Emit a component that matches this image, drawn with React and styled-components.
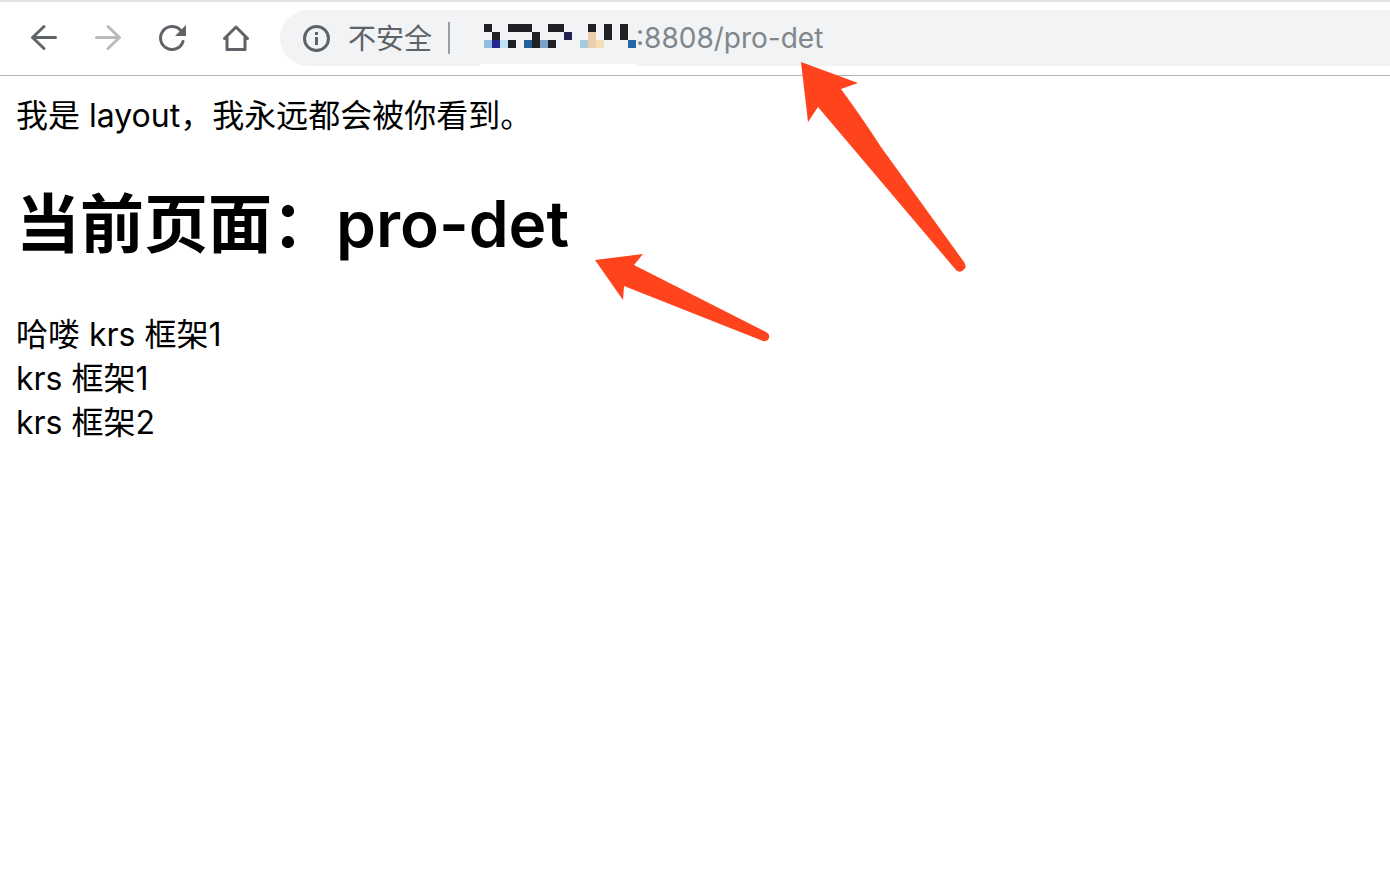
import React from "react";
import styled, { createGlobalStyle } from "styled-components";

const GlobalStyle = createGlobalStyle`
  * { box-sizing: border-box; }
  body {
    margin: 0;
    background: #fff;
    color: #000;
    font-family: Inter, "Noto Sans CJK SC", sans-serif;
  }
`;

const Window = styled.div`
  position: relative;
  min-height: 100vh;
  overflow: hidden;
`;

const Toolbar = styled.header`
  display: flex;
  align-items: center;
  height: 76px;
  padding: 0 0 1px 12px;
  border-top: 2px solid #dee1e6;
  border-bottom: 1px solid #b4b4b6;
`;

const NavButton = styled.button`
  display: flex;
  align-items: center;
  justify-content: center;
  width: 64px;
  height: 64px;
  padding: 0;
  border: 0;
  background: none;
  color: ${(p) => (p.disabled ? "#bababc" : "#5f6368")};
`;

const AddressBar = styled.div`
  display: flex;
  align-items: center;
  flex: 1;
  min-width: 0;
  height: 56px;
  margin-left: 12px;
  padding-left: 22px;
  border-radius: 28px 0 0 28px;
  background: #f1f3f4;
`;

const SiteInfo = styled.button`
  display: flex;
  align-items: center;
  gap: 18px;
  padding: 0;
  border: 0;
  background: none;
  color: #5f6368;
  font: 28px/40px "Noto Sans CJK SC", sans-serif;
`;

const SiteInfoLabel = styled.span`
  padding-bottom: 2px;
`;

const Divider = styled.span`
  width: 2px;
  height: 32px;
  margin: 0 30px 0 16px;
  background: #9b9ea2;
`;

const HiddenHost = styled.span`
  display: flex;
  align-items: flex-start;
  align-self: stretch;
  padding: 14px 0 0 4px;
  border-bottom: 2px solid #fff;
`;

const UrlInput = styled.input`
  flex: 1;
  min-width: 0;
  padding: 0;
  border: 0;
  outline: 0;
  background: none;
  color: #80868b;
  font: 28px/40px Inter, sans-serif;
`;

const Page = styled.main`
  padding: 18px 16px;
  font-size: 32px;
  line-height: 44px;
`;

const Title = styled.h1`
  margin: 41px 0 44px;
  font-size: 64px;
  font-weight: 600;
  line-height: 90px;
`;

const Line = styled.div``;

const Annotations = styled.svg`
  position: absolute;
  top: 0;
  left: 0;
  pointer-events: none;
`;

const MOSAIC = [
  [0, 0, 1, "#202124"], [3, 0, 3, "#202124"], [8, 0, 2, "#202124"],
  [13, 0, 1, "#202124"], [15, 0, 1, "#202124"], [17, 0, 1, "#202124"],
  [1, 1, 1, "#202124"], [6, 1, 1, "#202124"], [10, 1, 1, "#231f4f"],
  [13, 1, 1, "#ebcfaa"], [15, 1, 1, "#202124"], [17, 1, 1, "#202124"],
  [0, 2, 1, "#93bbdf"], [1, 2, 1, "#232590"], [2, 2, 1, "#bfe1f1"],
  [3, 2, 1, "#202124"], [5, 2, 1, "#245f97"], [6, 2, 1, "#202124"],
  [7, 2, 1, "#7ea3c8"], [8, 2, 1, "#202124"], [12, 2, 1, "#a8cadf"],
  [13, 2, 1, "#ebcfaa"], [14, 2, 1, "#f2dfba"], [18, 2, 1, "#2566a9"],
];

const stroke = { fill: "none", stroke: "currentColor", strokeWidth: 3, strokeLinecap: "round", strokeLinejoin: "round" };

function BackIcon() {
  return (
    <svg width="28" height="28" viewBox="0 0 28 28" {...stroke}>
      <path d="M25.5 13.5H2.5M14 2.5L2.5 13.5L14 24.5" />
    </svg>
  );
}

function ForwardIcon() {
  return (
    <svg width="28" height="28" viewBox="0 0 28 28" {...stroke}>
      <path d="M2.5 13.5H25.5M14 2.5L25.5 13.5L14 24.5" />
    </svg>
  );
}

function ReloadIcon() {
  return (
    <svg width="28" height="28" viewBox="0 0 28 28">
      <path d="M25 17.5A11.5 11.5 0 1 1 22.5 6.2" {...stroke} />
      <path d="M28 1V12H17Z" fill="currentColor" />
    </svg>
  );
}

function HomeIcon() {
  return (
    <svg width="28" height="28" viewBox="0 0 28 28" {...stroke}>
      <path d="M2.5 14.5L14 3L25.5 14.5M5 13V25.5H23V13" />
    </svg>
  );
}

function InfoIcon() {
  return (
    <svg width="28" height="28" viewBox="0 0 28 28">
      <circle cx="14.5" cy="14.5" r="12" fill="none" stroke="currentColor" strokeWidth="3" />
      <path d="M13 8H16V11H13ZM13 13H16V21H13Z" fill="currentColor" />
    </svg>
  );
}

export default function App() {
  return (
    <Window>
      <GlobalStyle />
      <Toolbar>
        <NavButton aria-label="后退"><BackIcon /></NavButton>
        <NavButton aria-label="前进" disabled><ForwardIcon /></NavButton>
        <NavButton aria-label="重新加载"><ReloadIcon /></NavButton>
        <NavButton aria-label="主页"><HomeIcon /></NavButton>
        <AddressBar>
          <SiteInfo>
            <InfoIcon />
            <SiteInfoLabel>不安全</SiteInfoLabel>
          </SiteInfo>
          <Divider />
          <HiddenHost>
            <svg width="152" height="24" viewBox="0 0 152 24" shapeRendering="crispEdges">
              {MOSAIC.map(([col, row, span, color]) => (
                <rect key={`${col}-${row}`} x={col * 8} y={row * 8} width={span * 8} height="8" fill={color} />
              ))}
            </svg>
          </HiddenHost>
          <UrlInput aria-label="地址" defaultValue=":8808/pro-det" spellCheck={false} />
        </AddressBar>
      </Toolbar>
      <Page>
        <Line>我是 layout，我永远都会被你看到。</Line>
        <Title>当前页面：pro-det</Title>
        <Line>哈喽 krs 框架1</Line>
        <Line>krs 框架1</Line>
        <Line>krs 框架2</Line>
      </Page>
      <Annotations width="970" height="350" viewBox="0 0 970 350" fill="#ff431c" aria-hidden="true">
        <path d="M801 62L858 83L841 89Q863 119 881 147L964 262Q968 268 962 271Q959 273 956 270L818 107L808 122Z" />
        <path d="M595 260L643 254L634 265L766 332Q770 334 769 338Q767 342 763 341L624 286L623 300Z" />
      </Annotations>
    </Window>
  );
}
